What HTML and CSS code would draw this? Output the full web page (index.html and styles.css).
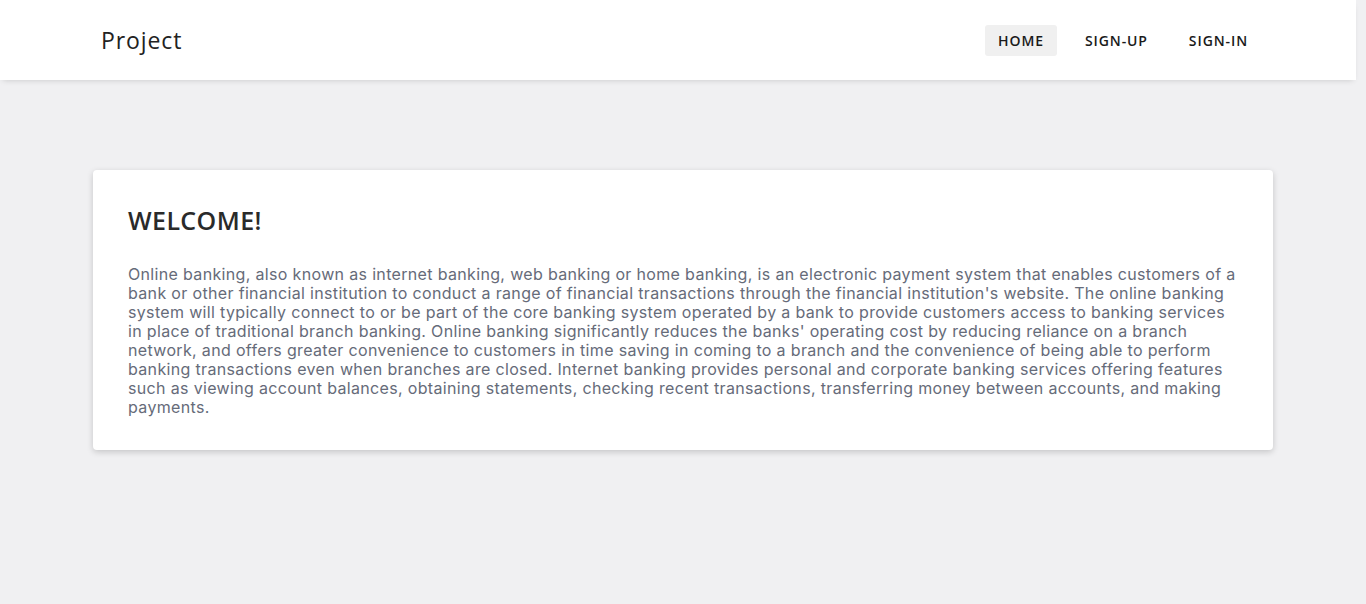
FILE: index.html
```html
<!DOCTYPE html>
<html lang="en">
<head>
<meta charset="utf-8">
<title>Project</title>
<link rel="stylesheet" href="styles.css">
</head>
<body>
<header class="topbar">
  <div class="topbar-inner">
    <a class="brand" href="#">Project</a>
    <nav class="nav">
      <a class="nav-link active" href="#">HOME</a>
      <a class="nav-link" href="#">SIGN-UP</a>
      <a class="nav-link" href="#">SIGN-IN</a>
    </nav>
  </div>
</header>
<main class="main">
  <section class="card">
    <h1 class="card-title">WELCOME!</h1>
    <p class="card-text">Online banking, also known as internet banking, web banking or home banking, is an electronic payment system that enables customers of a bank or other financial institution to conduct a range of financial transactions through the financial institution's website. The online banking system will typically connect to or be part of the core banking system operated by a bank to provide customers access to banking services in place of traditional branch banking. Online banking significantly reduces the banks' operating cost by reducing reliance on a branch network, and offers greater convenience to customers in time saving in coming to a branch and the convenience of being able to perform banking transactions even when branches are closed. Internet banking provides personal and corporate banking services offering features such as viewing account balances, obtaining statements, checking recent transactions, transferring money between accounts, and making payments.</p>
  </section>
</main>
</body>
</html>
```

FILE: styles.css
```css
* { box-sizing: border-box; }
html, body { margin: 0; padding: 0; }
body {
  background: #f0f0f2;
  font-family: "Open Sans", "Noto Sans", sans-serif;
  color: #333;
  min-height: 604px;
}
.topbar {
  background: #fff;
  height: 80px;
  width: calc(100% - 10px);
  box-shadow: 0 3px 6px -3px rgba(0,0,0,0.18);
  position: relative;
  z-index: 1;
}
.topbar-inner {
  width: 1180px;
  margin: 0 auto 0 93px;
  height: 100%;
  display: flex;
  align-items: center;
  justify-content: space-between;
  padding: 0 12px 0 8px;
}
.brand {
  font-size: 23px;
  color: #222;
  text-decoration: none;
  font-weight: 400;
  letter-spacing: 0.9px;
}
.nav { display: flex; gap: 15px; }
.nav-link {
  font-size: 14px;
  font-weight: 600;
  color: #1a1a1a;
  text-decoration: none;
  padding: 6px 13px;
  line-height: 19px;
  border-radius: 3px;
  letter-spacing: 0.9px;
}
.nav-link.active { background: #f0f0f0; }
.main { padding: 90px 0 0 93px; }
.card {
  width: 1180px;
  background: #fff;
  border-radius: 4px;
  box-shadow: 0 2px 6px rgba(0,0,0,0.18);
  padding: 35px 35px 33px;
}
.card-title {
  margin: 0 0 30px;
  font-size: 25px;
  font-weight: 600;
  color: #2a2a2a;
  line-height: 30px;
  letter-spacing: 0.4px;
}
.card-text {
  margin: 0;
  font-family: Inter, "Noto Sans", sans-serif;
  font-size: 16px;
  line-height: 19px;
  color: #666b79;
  letter-spacing: 0.336px;
}
```
